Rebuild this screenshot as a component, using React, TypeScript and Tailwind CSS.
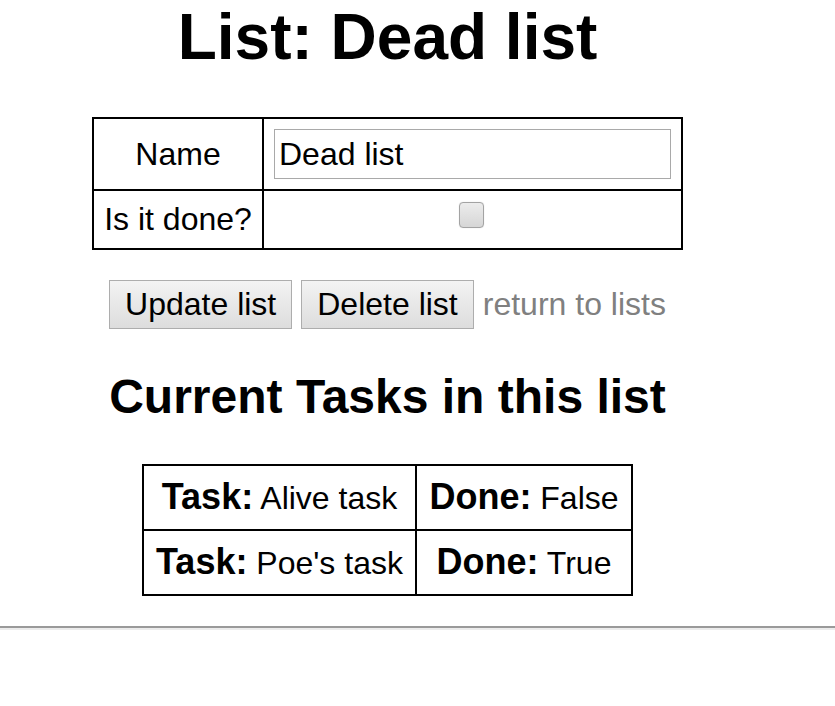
export default function App() {
  const tasks = [
    { name: "Alive task", done: "False" },
    { name: "Poe's task", done: "True" },
  ];

  return (
    <div className="bg-white min-h-[706px] text-black font-['Liberation_Sans',Arial,sans-serif] text-[32px] leading-[37px]">
      <div className="w-[775px] text-center">
        <h1 className="text-[64px] leading-[74px] font-bold mb-[43px]">List: Dead list</h1>

        <form onSubmit={(e) => e.preventDefault()}>
          <table className="mx-auto border-collapse border-2 border-black">
            <tbody>
              <tr>
                <td className="border-2 border-black px-[10px] py-[10px] w-[170px]">Name</td>
                <td className="border-2 border-black px-[10px] py-[10px] text-left">
                  <input
                    type="text"
                    defaultValue="Dead list"
                    className="w-[397px] h-[50px] border border-[#a9a9a9] px-[4px] text-[32px] outline-none"
                  />
                </td>
              </tr>
              <tr>
                <td className="border-2 border-black px-[10px] py-[10px] whitespace-nowrap">Is it done?</td>
                <td className="border-2 border-black px-[10px] py-[10px]">
                  <input
                    type="checkbox"
                    className="appearance-none w-[25px] h-[26px] align-middle -mt-[13px] mr-[2px] rounded-[4px] border border-[#a3a3a3] bg-gradient-to-b from-[#ececec] to-[#d6d6d6] shadow-[0_0_1px_rgba(0,0,0,0.2)]"
                  />
                </td>
              </tr>
            </tbody>
          </table>

          <div className="flex justify-center items-center gap-[9px] mt-[30px]">
            <button
              type="submit"
              className="px-[15px] py-[5px] border border-[#adadad] bg-gradient-to-b from-[#f3f3f3] to-[#dddddd] leading-[37px]"
            >
              Update list
            </button>
            <button
              type="button"
              className="px-[15px] py-[5px] border border-[#adadad] bg-gradient-to-b from-[#f3f3f3] to-[#dddddd] leading-[37px]"
            >
              Delete list
            </button>
            <a href="#" className="text-[#808080]">
              return to lists
            </a>
          </div>
        </form>

        <h2 className="text-[48px] leading-[55px] font-bold mt-[40px] mb-[40px]">Current Tasks in this list</h2>

        <table className="mx-auto border-collapse border-2 border-black">
          <tbody>
            {tasks.map((t) => (
              <tr key={t.name}>
                <td className="border-2 border-black w-[273px] px-[8px] py-[11px] leading-[40px] whitespace-nowrap">
                  <b className="text-[36px]">Task:</b> {t.name}
                </td>
                <td className="border-2 border-black w-[216px] px-[8px] py-[11px] leading-[40px] whitespace-nowrap">
                  <b className="text-[36px]">Done:</b> {t.done}
                </td>
              </tr>
            ))}
          </tbody>
        </table>
      </div>

      <hr className="mt-[30px] border-0 border-t-2 border-t-[#9a9a9a] border-b-2 border-b-[#ececec]" />
    </div>
  );
}
